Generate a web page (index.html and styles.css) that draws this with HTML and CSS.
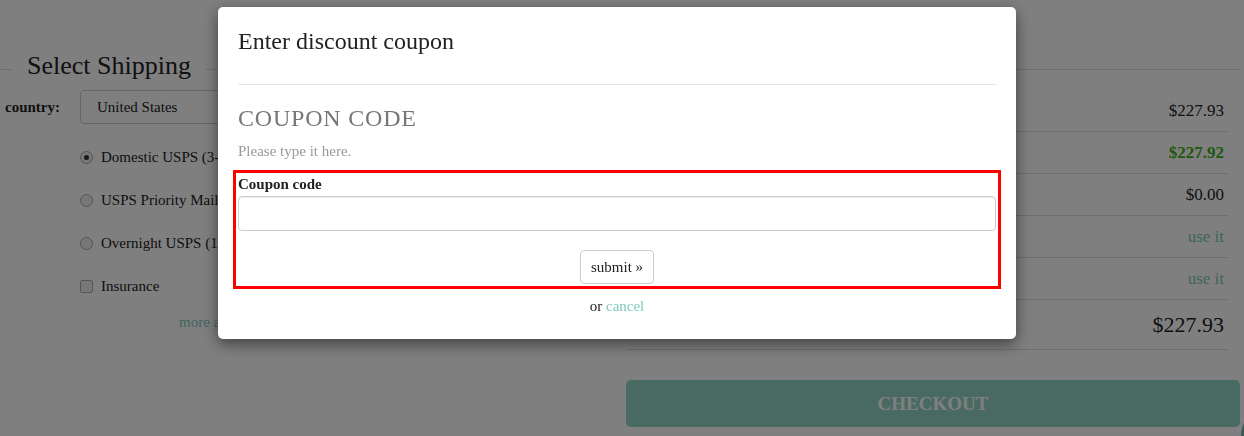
FILE: index.html
```html
<!DOCTYPE html>
<html lang="en">
<head>
    <meta charset="UTF-8">
    <meta name="viewport" content="width=device-width, initial-scale=1.0">
    <title>Checkout - Select Shipping</title>
    <link rel="stylesheet" href="styles.css">
</head>
<body>
    <div class="page">
        <div class="ship-head">
            <span class="rule rule-start"></span>
            <h2>Select Shipping</h2>
            <span class="rule"></span>
        </div>
        <div class="ship-body">
            <div class="ship-options">
                <div class="country-row">
                    <label for="country">country:</label>
                    <div class="select-box" id="country">United States</div>
                </div>
                <ul class="option-list">
                    <li><span class="radio checked"></span>Domestic USPS (3-4)</li>
                    <li><span class="radio"></span>USPS Priority Mail</li>
                    <li><span class="radio"></span>Overnight USPS (1-2)</li>
                    <li><span class="checkbox"></span>Insurance</li>
                </ul>
                <a class="more-link" href="#">more about</a>
            </div>
            <div class="ship-summary">
                <div class="sum-row"><span>$227.93</span></div>
                <div class="sum-row"><span class="green">$227.92</span></div>
                <div class="sum-row"><span>$0.00</span></div>
                <div class="sum-row"><a href="#">use it</a></div>
                <div class="sum-row"><a href="#">use it</a></div>
                <div class="sum-row total"><span>$227.93</span></div>
                <button class="checkout">CHECKOUT</button>
            </div>
        </div>
    </div>

    <span class="chat-bubble"></span>
    <div class="overlay"></div>

    <div class="modal">
        <h3 class="modal-title">Enter discount coupon</h3>
        <hr>
        <h4 class="coupon-heading">COUPON CODE</h4>
        <p class="hint">Please type it here.</p>
        <form class="coupon-form" onsubmit="return false;">
            <label for="couponCode">Coupon code</label>
            <input type="text" id="couponCode">
            <div class="form-actions">
                <button type="submit">submit &raquo;</button>
            </div>
        </form>
        <p class="alt">or <a href="#">cancel</a></p>
    </div>
</body>
</html>
```

FILE: styles.css
```css
body {
    margin: 0;
    font-family: "Liberation Serif", "Times New Roman", serif;
    font-size: 15px;
    color: #333;
    background: #fff;
}
a {
    color: #7fcbbd;
    text-decoration: none;
}
.page {
    width: 1240px;
    padding-top: 51px;
}
.ship-head {
    display: flex;
    align-items: center;
}
.ship-head h2 {
    margin: 0 15px;
    font-size: 26px;
    font-weight: normal;
    line-height: 30px;
    color: #222;
}
.rule {
    flex: 1;
    height: 1px;
    margin-top: 7px;
    background: #ddd;
}
.rule-start {
    flex: 0 0 12px;
}
.ship-body {
    display: flex;
}
.ship-options {
    width: 626px;
}
.country-row {
    display: flex;
    align-items: center;
    margin-top: 9px;
}
.country-row label {
    width: 75px;
    padding-left: 5px;
    font-weight: bold;
    color: #222;
}
.select-box {
    width: 300px;
    height: 34px;
    line-height: 32px;
    box-sizing: border-box;
    padding-left: 16px;
    border: 1px solid #ccc;
    border-radius: 4px;
    color: #222;
}
.option-list {
    list-style: none;
    margin: 12px 0 0;
    padding: 0 0 0 80px;
}
.option-list li {
    display: flex;
    align-items: center;
    height: 43px;
    color: #222;
}
.radio, .checkbox {
    width: 11px;
    height: 11px;
    margin-right: 8px;
    border: 1px solid #aaa;
    background: #eee;
    box-sizing: content-box;
}
.radio {
    border-radius: 50%;
    position: relative;
}
.radio.checked::after {
    content: "";
    position: absolute;
    left: 3px;
    top: 3px;
    width: 5px;
    height: 5px;
    border-radius: 50%;
    background: #333;
}
.checkbox {
    border-radius: 2px;
}
.more-link {
    display: block;
    margin: 4px 0 0 179px;
    line-height: 20px;
}
.ship-summary {
    width: 614px;
    margin-top: 9px;
}
.sum-row {
    display: flex;
    justify-content: flex-end;
    align-items: center;
    height: 41px;
    margin-right: 12px;
    padding: 0 4px;
    border-bottom: 1px solid #ddd;
    font-size: 17px;
    color: #222;
}
.sum-row .green {
    color: #40b020;
    font-weight: bold;
}
.sum-row.total {
    height: 49px;
    font-size: 22px;
}
.checkout {
    display: block;
    width: 614px;
    height: 47px;
    margin-top: 30px;
    border: none;
    border-radius: 5px;
    background: #93d5c4;
    color: #fff;
    font-family: "Liberation Serif", serif;
    font-size: 19px;
    font-weight: bold;
}
.chat-bubble {
    position: fixed;
    left: 1241px;
    top: 406px;
    width: 60px;
    height: 60px;
    border-radius: 50%;
    background: #6fb3a4;
}
.overlay {
    position: fixed;
    inset: 0;
    background: rgba(0, 0, 0, 0.5);
}
.modal {
    position: fixed;
    left: 218px;
    top: 7px;
    width: 798px;
    box-sizing: border-box;
    padding: 21px 20px 23px;
    background: #fff;
    border-radius: 5px;
    box-shadow: 0 5px 15px rgba(0, 0, 0, 0.5);
}
.modal-title {
    margin: 0;
    font-size: 24px;
    font-weight: normal;
    line-height: 26px;
    color: #222;
}
.modal hr {
    margin: 30px 0 0;
    border: 0;
    border-top: 1px solid #e5e5e5;
}
.coupon-heading {
    margin: 20px 0 0;
    font-size: 24px;
    font-weight: normal;
    line-height: 26px;
    letter-spacing: 0.8px;
    color: #777;
}
.hint {
    margin: 10px 0 0;
    line-height: 20px;
    color: #999;
}
.coupon-form {
    margin-top: 14px;
    outline: 3px solid #f00;
    outline-offset: 2px;
}
.coupon-form label {
    display: block;
    margin-bottom: 3px;
    font-weight: bold;
    line-height: 18px;
    color: #222;
}
.coupon-form input {
    display: block;
    width: 100%;
    height: 35px;
    box-sizing: border-box;
    border: 1px solid #ccc;
    border-radius: 4px;
    box-shadow: inset 0 1px 1px rgba(0, 0, 0, 0.075);
}
.form-actions {
    margin-top: 19px;
    text-align: center;
}
.form-actions button {
    height: 34px;
    padding: 0 10px;
    border: 1px solid #ccc;
    border-radius: 4px;
    background: #fff;
    font-family: "Liberation Serif", serif;
    font-size: 15px;
    color: #222;
}
.alt {
    margin: 12px 0 0;
    text-align: center;
    line-height: 20px;
    color: #222;
}
```
